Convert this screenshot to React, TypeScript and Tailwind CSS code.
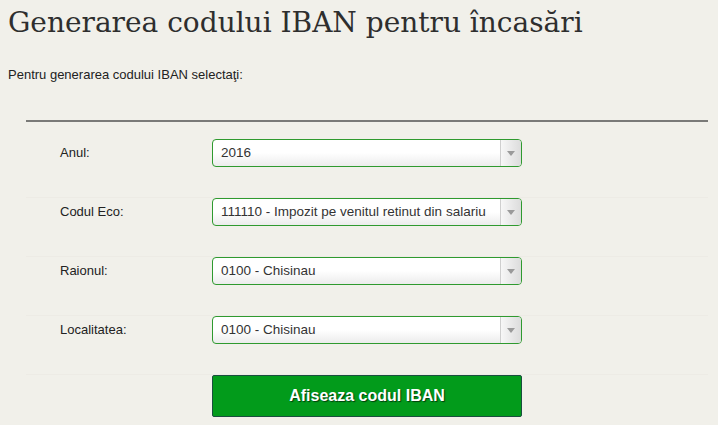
import React from "react";

const Select = ({ value }: { value: string }) => (
  <div className="relative flex h-[28px] w-[310px] items-center rounded-[4px] border border-[#2f9a2f] bg-gradient-to-b from-white via-white to-[#ececec]">
    <span className="pl-[8px] text-[13.5px] text-[#333]">{value}</span>
    <div className="absolute right-0 top-0 flex h-full w-[21px] items-center justify-center rounded-r-[3px] border-l border-[#cfcfcf] bg-gradient-to-r from-[#f7f7f7] to-[#dcdcdc]">
      <svg width="8" height="5" viewBox="0 0 8 5">
        <path d="M0 0 L8 0 L4 5 Z" fill="#9a9a9a" />
      </svg>
    </div>
  </div>
);

const rows = [
  ["Anul:", "2016"],
  ["Codul Eco:", "111110 - Impozit pe venitul retinut din salariu"],
  ["Raionul:", "0100 - Chisinau"],
  ["Localitatea:", "0100 - Chisinau"],
];

export default function App() {
  return (
    <div className="h-[425px] w-[718px] overflow-hidden bg-[#f1f0ea] font-['Liberation_Sans',Arial,sans-serif] text-[#222]">
      <h1 className="pl-[8px] pt-[3px] font-['DejaVu_Serif',Georgia,serif] text-[28px] leading-[40px] text-[#2e2e2e]">
        Generarea codului IBAN pentru încasări
      </h1>
      <p className="mt-[25px] pl-[8px] text-[13px] leading-[14px]">Pentru generarea codului IBAN selectaţi:</p>
      <div className="ml-[26px] mt-[38px] w-[682px] border-t-[2px] border-[#7a7a78]">
        <div className="pt-[17px]">
          {rows.map(([label, value]) => (
            <div key={label} className="flex h-[59px] items-start border-b border-[#edebe5]">
              <div className="w-[186px] pl-[34px] pt-[7px] text-[13px] leading-[14px] text-[#222]">{label}</div>
              <Select value={value} />
            </div>
          ))}
        </div>
        <div className="pl-[186px]">
          <button className="flex h-[42px] w-[310px] items-center justify-center rounded-[2px] border border-[#1a4f3f] bg-[#029b1b] text-[16px] font-bold text-white [text-shadow:1px_1px_1px_rgba(0,0,0,0.6)]">
            Afiseaza codul IBAN
          </button>
        </div>
      </div>
    </div>
  );
}
